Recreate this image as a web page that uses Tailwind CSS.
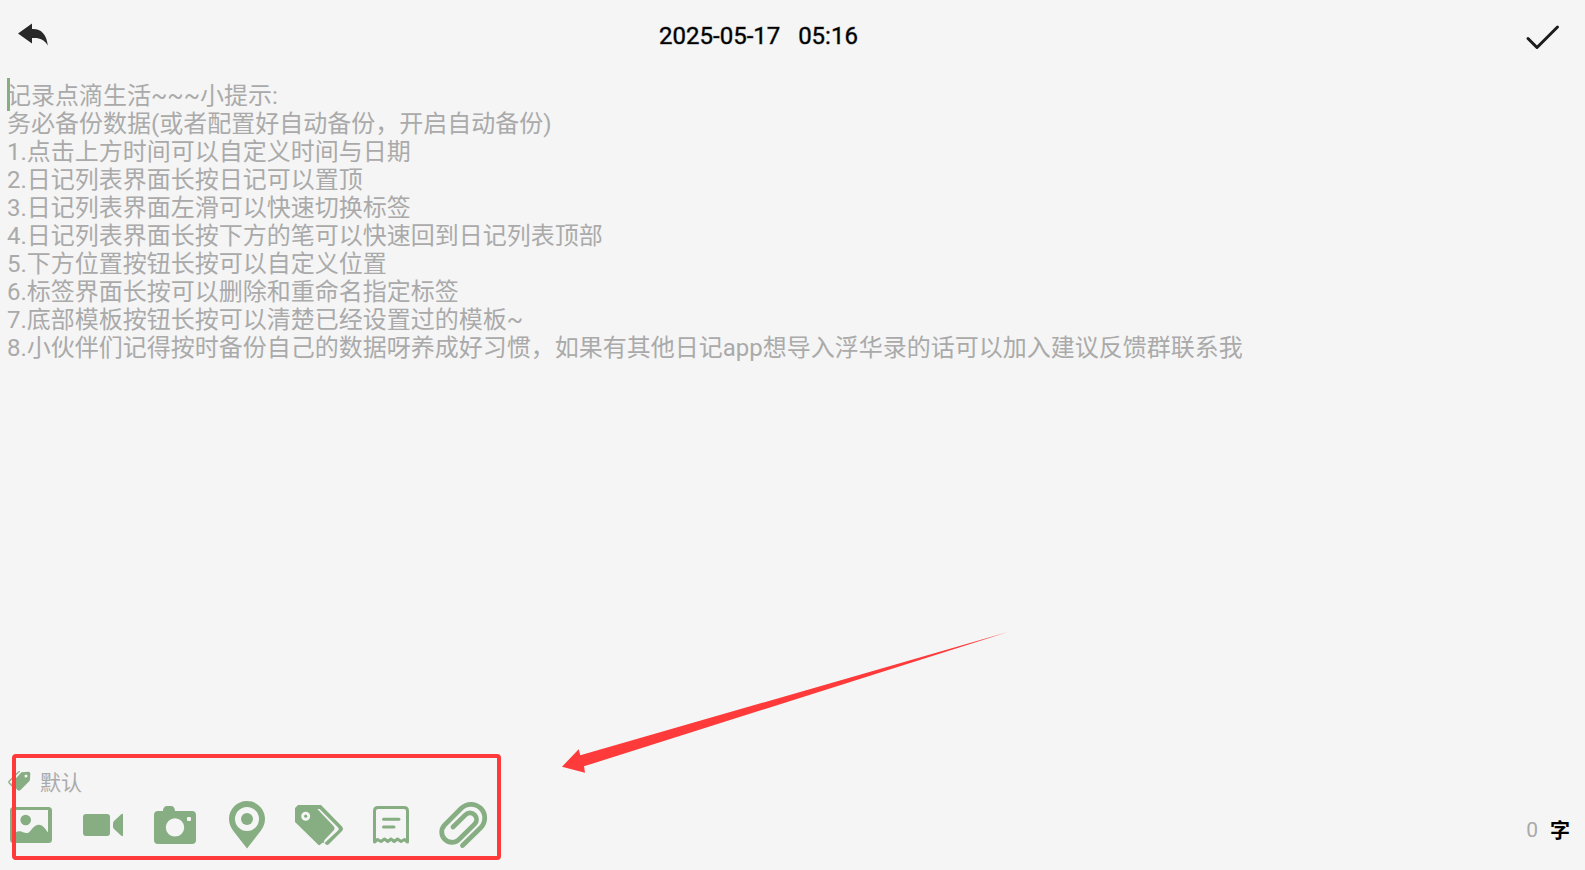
<!DOCTYPE html>
<html lang="zh-CN">
  <head>
    <meta charset="UTF-8" />
    <meta name="viewport" content="width=device-width, initial-scale=1.0" />
    <title>浮华录 - 写日记</title>
    <script src="https://cdn.jsdelivr.net/npm/@tailwindcss/browser@4"></script>
  </head>
  <body class="relative flex flex-col min-h-screen bg-[#f5f5f5] font-[Roboto,'Noto_Sans_CJK_SC',sans-serif]">

    <!-- Topbar -->
    <header class="flex items-center h-[70px]">
      <button aria-label="返回" class="w-[66px] h-full pl-4">
        <svg class="w-8 h-8 text-[#282828]" viewBox="0 0 32 32" fill="currentColor">
          <path d="M2 14.5 16 4.500V10C25 9.500 30.500 15 31.800 26.500C28 20 23.500 18.500 16 19V24.500Z" />
        </svg>
      </button>
      <button class="flex-1 pt-0.5 text-2xl text-black text-center whitespace-pre [-webkit-text-stroke:1px_rgb(0_0_0/40%)]">2025-05-17   05:16</button>
      <button aria-label="完成" class="flex justify-end items-center w-[134px] h-full pr-6">
        <svg class="w-9 h-9 text-[#1c1c1e]" viewBox="0 0 36 36" fill="none" stroke="currentColor" stroke-width="3" stroke-linecap="round" stroke-linejoin="round">
          <path d="M3 21.500 12 30.500 32.500 10" />
        </svg>
      </button>
    </header>

    <!-- Editor -->
    <main class="relative flex flex-col flex-1 pt-3">
      <span class="absolute left-[7px] top-2 w-[3px] h-[33px] bg-[#87ae83]"></span>
      <textarea aria-label="日记内容" class="flex-1 w-full px-[7px] text-2xl/7 resize-none outline-none bg-transparent text-black placeholder:text-[#aaaaaa]" placeholder="记录点滴生活~~~小提示:&#10;务必备份数据(或者配置好自动备份，开启自动备份)&#10;1.点击上方时间可以自定义时间与日期&#10;2.日记列表界面长按日记可以置顶&#10;3.日记列表界面左滑可以快速切换标签&#10;4.日记列表界面长按下方的笔可以快速回到日记列表顶部&#10;5.下方位置按钮长按可以自定义位置&#10;6.标签界面长按可以删除和重命名指定标签&#10;7.底部模板按钮长按可以清楚已经设置过的模板~&#10;8.小伙伴们记得按时备份自己的数据呀养成好习惯，如果有其他日记app想导入浮华录的话可以加入建议反馈群联系我"></textarea>
    </main>

    <!-- Toolbar -->
    <footer class="pl-[7px] pr-3.5 pb-5">
      <button class="flex items-center gap-[9px] h-10 text-[21px] text-[#aaaaaa]">
        <svg class="w-6 h-6 text-[#87ae83]" viewBox="0 0 24 24">
          <path fill="currentColor" fill-rule="evenodd" d="M14.500 2.200 21.500 1.800Q23.300 1.800 23.300 3.500L23 9.500Q23 10.500 22 11.500L13.500 20Q12 21.500 10.500 20L5 14.500Q4 13.500 5 12.500ZM19 4.500a1.500 1.500 0 1 0 0 3a1.500 1.500 0 1 0 0-3Z" />
          <path fill="none" stroke="currentColor" stroke-width="1.300" d="M13 1.500 11.500 2 2.200 11.300Q1.400 12.200 2.200 13L5.500 16.300" />
        </svg>
        <span class="pt-1">默认</span>
      </button>
      <div class="flex items-center justify-between">
        <div class="flex gap-6 text-[#87ae83]">
          <button aria-label="图片">
            <svg class="w-12 h-12" viewBox="0 0 48 48" fill="currentColor">
              <path fill-rule="evenodd" d="M6.500 5H41.500Q45 5 45 8.500V37.500Q45 41 41.500 41H6.500Q3 41 3 37.500V8.500Q3 5 6.500 5ZM7 8V31C11 28.500 14 29 16 30.300C20 32 22 31 24.500 27.500C29 21 34.500 21.500 38 26.500L41 30.500V8Z" />
              <circle cx="18.700" cy="18" r="5.300" />
            </svg>
          </button>
          <button aria-label="视频">
            <svg class="w-12 h-12" viewBox="0 0 48 48" fill="currentColor">
              <rect x="4" y="12" width="27" height="22" rx="3" />
              <path d="M34 21.500Q34 20 35 19L42 12.500Q44 11 44 13V33Q44 35 42 33.500L35 27Q34 26 34 24.500Z" />
            </svg>
          </button>
          <button aria-label="拍照">
            <svg class="w-12 h-12" viewBox="0 0 48 48" fill="currentColor">
              <path fill-rule="evenodd" d="M7 9H12C12 6 13.500 4 16 4H20C22.500 4 24 6 24 9H41Q45 9 45 13V38Q45 42 41 42H7Q3 42 3 38V13Q3 9 7 9ZM24 16.200a9.200 9.200 0 1 0 0 18.400a9.200 9.200 0 1 0 0-18.400ZM37 15Q36 15 36 16V18Q36 19 37 19H39Q40 19 40 18V16Q40 15 39 15Z" />
            </svg>
          </button>
          <button aria-label="位置">
            <svg class="w-12 h-12 overflow-visible" viewBox="0 0 48 48" fill="currentColor">
              <path fill-rule="evenodd" d="M24-1C14-1 6 7 6 17C6 21 7.500 25 10 28.500L24 46.500L38 28.500C40.500 25 42 21 42 17C42 7 34-1 24-1ZM24 5a12 12 0 1 1 0 24a12 12 0 1 1 0-24Z" />
              <circle cx="24" cy="17" r="6" />
            </svg>
          </button>
          <button aria-label="标签">
            <svg class="w-12 h-12" viewBox="0 0 48 48" fill="currentColor">
              <path fill-rule="evenodd" d="M3 3H18.500L38.500 24Q40.500 26.300 38.500 28.500L29.500 38L28.500 41Q26 40.500 25.500 42.500Q24 44 22.500 42L0 20V6ZM10.700 9.700a4.500 4.500 0 1 0 0 9a4.500 4.500 0 1 0 0-9Z" />
              <circle cx="10.700" cy="14.200" r="1.600" />
              <path d="M18 3H26L47 24.500Q49 27 47 29L34 42Q32.500 43.500 31 42.500L29.500 41L43 28.500Q44.500 27 43 25.500L24.500 7H20Z" />
            </svg>
          </button>
          <button aria-label="模板">
            <svg class="w-12 h-12" viewBox="0 0 48 48" fill="none" stroke="currentColor" stroke-width="3" stroke-linecap="round" stroke-linejoin="round">
              <path d="M7.500 40V9Q7.500 5.500 11 5.500H37Q40.500 5.500 40.500 9V40L37.500 37.500L34 39.500L30.500 37L27.200 39.500L24 37L20.800 39.500L17.500 37L14 39.500L10.500 37.500Z" />
              <path d="M16.500 17.200H32M16.500 25H27" />
            </svg>
          </button>
          <button aria-label="附件">
            <svg class="w-12 h-12 overflow-visible" viewBox="0 0 48 48" fill="none" stroke="currentColor" stroke-width="4.800" stroke-linecap="round">
              <path d="M23.500 43.500 41.700 25.700A13.700 13.700 0 0 0 22.300 6.300L5.300 23.300A10.200 10.200 0 0 0 19.700 37.700L35.600 22.100A6.500 6.500 0 0 0 26.400 12.900L14 25" />
            </svg>
          </button>
        </div>
        <p class="flex items-center gap-3 pt-2.5 pr-px text-[21px] text-[#aaaaaa]">
          0 <span class="font-bold text-xl text-black">字</span>
        </p>
      </div>
    </footer>

    <!-- Toolbar highlight and pointer -->
    <div class="absolute left-3 bottom-2.5 w-[489px] h-[106px] border-4 border-[#ff3a3a] rounded-sm pointer-events-none"></div>
    <svg class="absolute left-[562px] bottom-24 w-[446px] h-[142px] text-[#ff3a3a] pointer-events-none" viewBox="0 0 446 142" fill="currentColor">
      <path d="M0 134.700 16.700 117.300 18.300 123.300 446 0 22 134.300 23 140.700Z" />
    </svg>
  </body>
</html>
